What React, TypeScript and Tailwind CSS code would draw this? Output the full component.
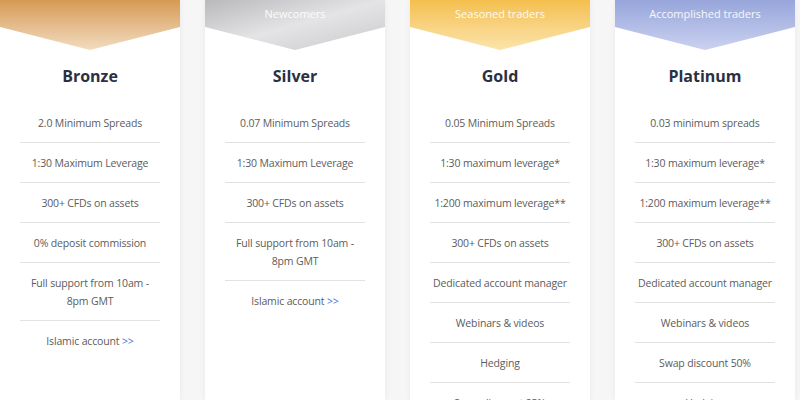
import React from "react";

type Plan = {
  name: string;
  tag: string;
  grad: string;
  rows: React.ReactNode[];
};

const link = (
  <>
    Islamic account <span className="text-[#3f6fd8]">&gt;&gt;</span>
  </>
);

const plans: Plan[] = [
  {
    name: "Bronze",
    tag: "",
    grad: "bg-gradient-to-b from-[#d59a52] to-[#f2dcc0]",
    rows: [
      "2.0 Minimum Spreads",
      "1:30 Maximum Leverage",
      "300+ CFDs on assets",
      "0% deposit commission",
      <>Full support from 10am -<br />8pm GMT</>,
      link,
    ],
  },
  {
    name: "Silver",
    tag: "Newcomers",
    grad: "bg-gradient-to-br from-[#b9b9bb] via-[#e4e4e6] to-[#c9c9cc]",
    rows: [
      "0.07 Minimum Spreads",
      "1:30 Maximum Leverage",
      "300+ CFDs on assets",
      <>Full support from 10am -<br />8pm GMT</>,
      link,
    ],
  },
  {
    name: "Gold",
    tag: "Seasoned traders",
    grad: "bg-gradient-to-b from-[#f4bf4c] to-[#fbe4aa]",
    rows: [
      "0.05 Minimum Spreads",
      "1:30 maximum leverage*",
      "1:200 maximum leverage**",
      "300+ CFDs on assets",
      "Dedicated account manager",
      "Webinars & videos",
      "Hedging",
      "Swap discount 25%",
    ],
  },
  {
    name: "Platinum",
    tag: "Accomplished traders",
    grad: "bg-gradient-to-b from-[#97a5db] to-[#cbd2f0]",
    rows: [
      "0.03 minimum spreads",
      "1:30 maximum leverage*",
      "1:200 maximum leverage**",
      "300+ CFDs on assets",
      "Dedicated account manager",
      "Webinars & videos",
      "Swap discount 50%",
      "Hedging",
    ],
  },
];

function Card({ p }: { p: Plan }) {
  return (
    <div className="w-[180px] shrink-0 bg-white shadow-[0_0_6px_rgba(0,0,0,0.06)] flex flex-col overflow-hidden">
      <div
        className={`h-[50px] shrink-0 w-full ${p.grad} [clip-path:polygon(0_0,100%_0,100%_27px,50%_100%,0_27px)] flex justify-center`}
      >
        <span className="mt-[6px] text-[11px] leading-[16px] text-white/90">{p.tag}</span>
      </div>
      <div className="mt-[14px] shrink-0 text-center text-[16px] leading-[24px] font-bold text-[#2b3043]">
        {p.name}
      </div>
      <div className="mt-[15px] mx-5 shrink-0 flex flex-col">
        {p.rows.map((r, i) => (
          <div
            key={i}
            className={`pt-[11px] pb-[10px] text-center text-[10.5px] tracking-[-0.15px] leading-[18px] whitespace-nowrap text-[#5c5c5c] border-b ${
              i < p.rows.length - 1 ? "border-[#e2e2e2]" : "border-transparent"
            }`}
          >
            {r}
          </div>
        ))}
      </div>
    </div>
  );
}

export default function App() {
  return (
    <div
      className="w-[800px] h-[400px] overflow-hidden bg-[#f6f6f6] flex gap-[25px] items-stretch"
      style={{ fontFamily: '"Open Sans", "Noto Sans", sans-serif' }}
    >
      {plans.map((p) => (
        <Card key={p.name} p={p} />
      ))}
    </div>
  );
}
